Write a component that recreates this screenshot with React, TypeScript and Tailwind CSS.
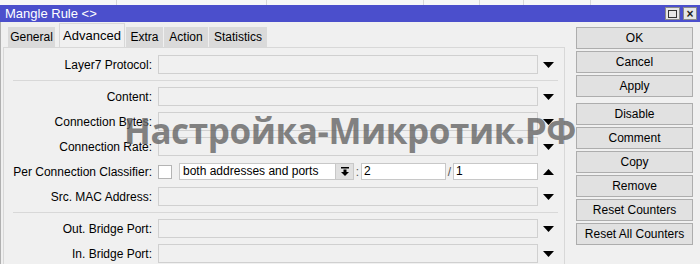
import React from 'react';

const font = { fontFamily: '"Liberation Sans", Arial, sans-serif' };

function ArrowDown() {
  return (
    <svg width="11" height="6" viewBox="0 0 11 6">
      <polygon points="0,0 11,0 5.5,6" fill="#000" />
    </svg>
  );
}

function ArrowUp() {
  return (
    <svg width="11" height="6" viewBox="0 0 11 6">
      <polygon points="0,6 11,6 5.5,0" fill="#000" />
    </svg>
  );
}

function Field({ label, up }: { label: string; up?: boolean }) {
  return (
    <div className="flex items-center h-[19px]">
      <div className="w-[149px] pr-[1px] text-right text-[12px] text-black whitespace-nowrap">{label}</div>
      <div className="ml-[5px] w-[380px] h-[19px] border border-[#d0d0d0] bg-[#f0f0f0]" />
      <div className="w-[21px] flex justify-center">{up ? <ArrowUp /> : <ArrowDown />}</div>
    </div>
  );
}

function Separator() {
  return <div className="ml-[9px] w-[545px] h-px bg-[#d8d8d8] my-[6px]" />;
}

function Btn({ label }: { label: string }) {
  return (
    <div className="h-[22px] w-[117px] border border-[#adadad] bg-[#e1e1e1] flex items-center justify-center text-[12px] text-black">
      {label}
    </div>
  );
}

export default function App() {
  const tabs = [
    { name: 'General', w: 'w-[47px]' },
    { name: 'Advanced', w: 'w-[66px]', active: true },
    { name: 'Extra', w: 'w-[37px]' },
    { name: 'Action', w: 'w-[44px]' },
    { name: 'Statistics', w: 'w-[58px]' },
  ];

  return (
    <div className="relative w-[700px] h-[264px] overflow-hidden bg-[#f0f0f0]" style={font}>
      {/* table columns behind the window */}
      <div className="h-[5px] flex bg-[#f7f7f7]">
        <div className="w-[117px] border-r border-[#d8d8d8]" />
        <div className="w-[150px] border-r border-[#d8d8d8]" />
        <div className="w-[157px] border-r border-[#d8d8d8]" />
        <div className="w-[56px] border-r border-[#d8d8d8]" />
        <div className="w-[44px] border-r border-[#d8d8d8]" />
        <div className="w-[67px] border-r border-[#d8d8d8]" />
      </div>

      {/* title bar */}
      <div className="h-[17px] bg-[#4b4fcc] flex items-center pl-[5px] pr-[3px]">
        <span className="text-white text-[13px] leading-none">Mangle Rule &lt;&gt;</span>
        <div className="ml-auto flex gap-[3px]">
          <div className="w-[15px] h-[13px] bg-[#e6e6e6] border border-[#8a8a8a] flex items-center justify-center">
            <div className="w-[9px] h-[8px] border border-[#333]" />
          </div>
          <div className="w-[14px] h-[13px] bg-[#e6e6e6] border border-[#8a8a8a] flex items-center justify-center text-[12px] font-bold leading-none text-[#222]">
            ×
          </div>
        </div>
      </div>

      <div className="flex border-l border-[#b0b0b0]">
        {/* left: tabs + panel */}
        <div className="ml-[2px] w-[562px]">
          <div className="h-[25px] flex items-end pl-[5px]">
            {tabs.map((t, i) => (
              <div
                key={t.name}
                className={`${t.w} ${i === 1 ? 'ml-[4px]' : i > 1 ? 'ml-[1px]' : ''} ${
                  t.active ? 'h-[24px] bg-[#f0f0f0] border-t border-x border-[#d8d8d8] text-[13px]' : 'h-[20px] bg-[#dadada] text-[12px]'
                } flex items-center justify-center text-black`}
              >
                {t.name}
              </div>
            ))}
          </div>
          <div className="h-[300px] border-l border-t border-r border-[#d8d8d8] pt-[7px]">
            <div className="flex flex-col gap-[6px]">
              <Field label="Layer7 Protocol:" />
            </div>
            <Separator />
            <div className="flex flex-col gap-[6px]">
              <Field label="Content:" />
              <Field label="Connection Bytes:" />
              <Field label="Connection Rate:" />
              <div className="flex items-center h-[19px]">
                <div className="w-[149px] pr-[1px] text-right text-[12px] text-black whitespace-nowrap">Per Connection Classifier:</div>
                <div className="ml-[5px] w-[14px] h-[14px] border border-[#b4b4b4] bg-white" />
                <div className="ml-[7px] w-[157px] h-[17px] border border-[#c8c8c8] bg-white text-[12px] leading-[15px] pl-[3px]">
                  both addresses and ports
                </div>
                <div className="w-[18px] h-[17px] bg-[#e0e0e0] border border-[#c8c8c8] border-l-0 flex items-center justify-center">
                  <svg width="8" height="9" viewBox="0 0 8 9">
                    <rect x="0" y="0" width="8" height="1.5" fill="#000" />
                    <polygon points="2.5,2.5 5.5,2.5 5.5,5 8,5 4,9 0,5 2.5,5" fill="#000" />
                  </svg>
                </div>
                <span className="w-[7px] text-center text-[12px] text-[#555]">:</span>
                <div className="w-[85px] h-[17px] border border-[#c8c8c8] bg-white text-[12px] leading-[15px] pl-[2px]">2</div>
                <span className="w-[7px] text-center text-[12px] text-[#555]">/</span>
                <div className="w-[85px] h-[17px] border border-[#c8c8c8] bg-white text-[12px] leading-[15px] pl-[2px]">1</div>
                <div className="w-[21px] flex justify-center"><ArrowUp /></div>
              </div>
              <Field label="Src. MAC Address:" />
            </div>
            <Separator />
            <div className="flex flex-col gap-[6px]">
              <Field label="Out. Bridge Port:" />
              <Field label="In. Bridge Port:" />
            </div>
          </div>
        </div>

        {/* right: buttons */}
        <div className="ml-[11px] pt-[5px] flex flex-col gap-[2px]">
          <Btn label="OK" />
          <Btn label="Cancel" />
          <Btn label="Apply" />
          <div className="mt-[4px] flex flex-col gap-[2px]">
            <Btn label="Disable" />
            <Btn label="Comment" />
            <Btn label="Copy" />
            <Btn label="Remove" />
            <Btn label="Reset Counters" />
            <Btn label="Reset All Counters" />
          </div>
        </div>
      </div>

      {/* watermark */}
      <div
        className="absolute left-[124px] top-[113px] text-[35px] font-bold leading-none tracking-[-0.4px] text-[#666666] opacity-80 whitespace-nowrap pointer-events-none"
        style={{ fontFamily: '"Open Sans", sans-serif' }}
      >
        Настройка-Микротик.РФ
      </div>
    </div>
  );
}
